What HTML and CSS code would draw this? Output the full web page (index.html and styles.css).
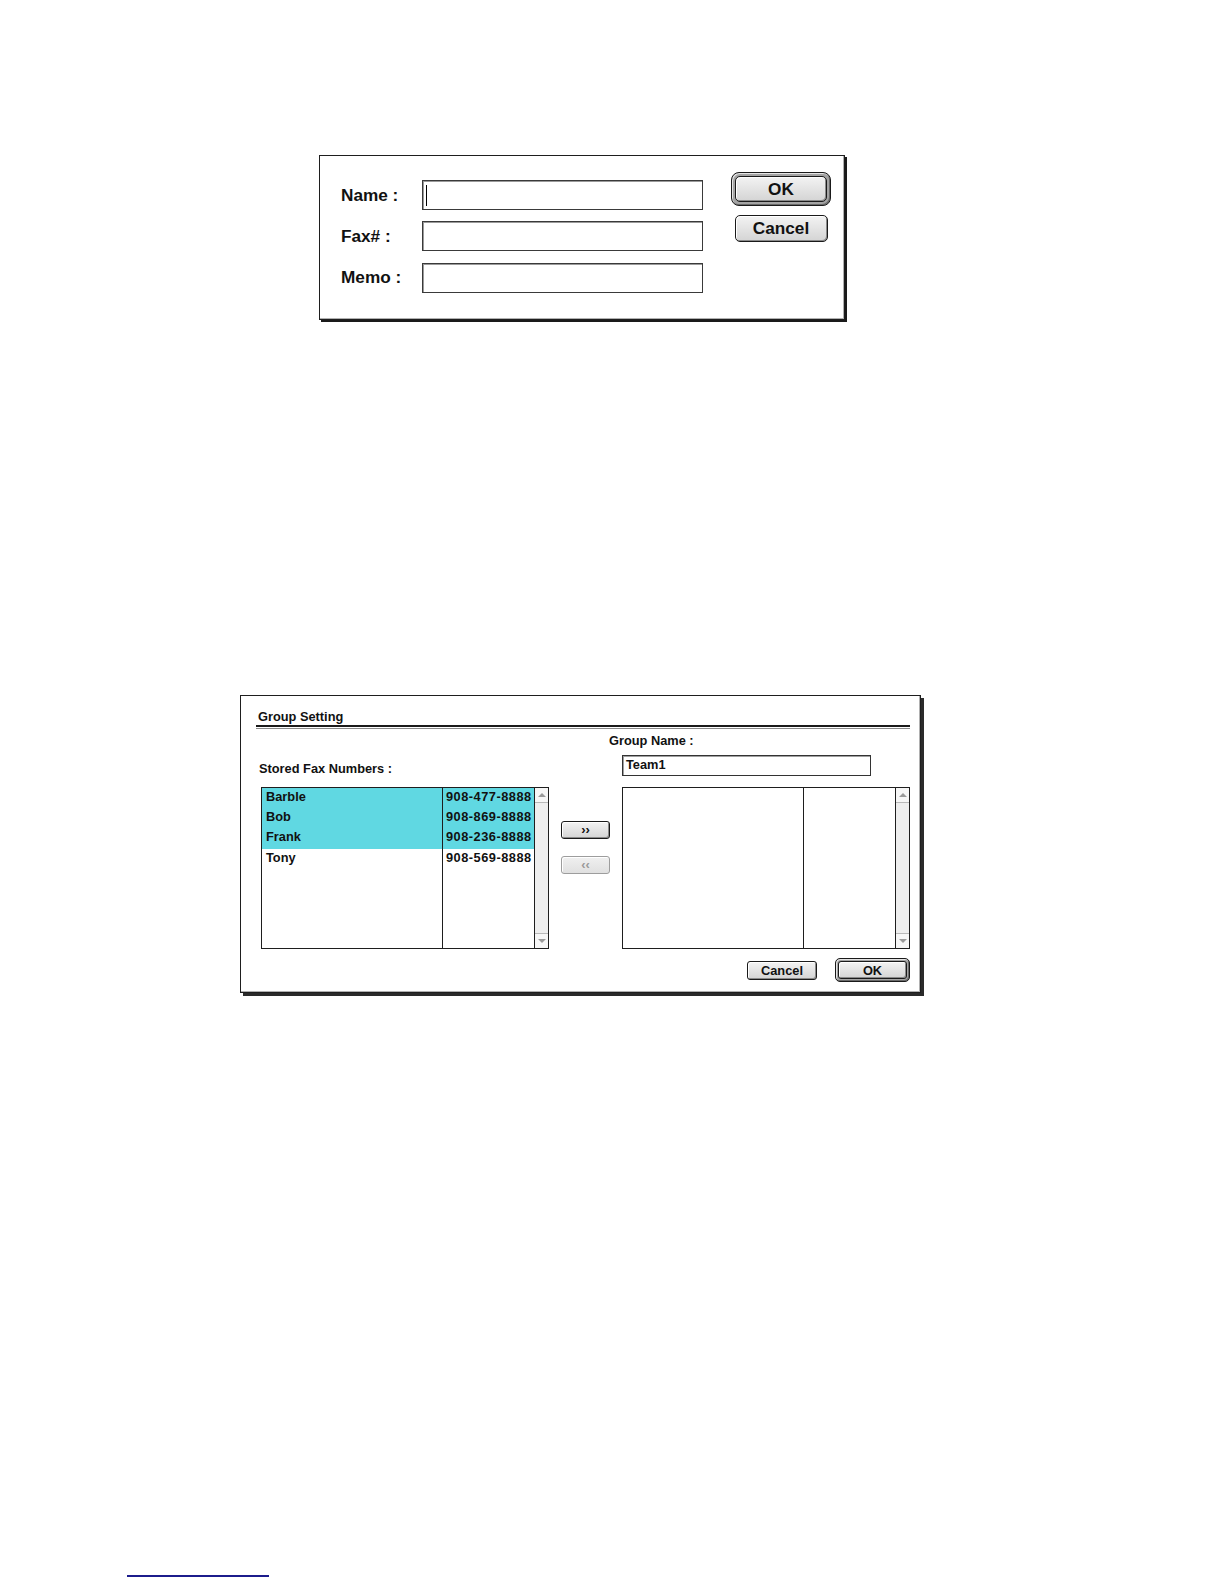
FILE: index.html
```html
<!DOCTYPE html>
<html>
<head>
<meta charset="utf-8">
<link rel="stylesheet" href="styles.css">
</head>
<body>
<div class="dlg1">
  <div class="form1">
    <label class="lbl1">Name :</label>
    <div class="field1"><span class="caret"></span></div>
    <label class="lbl1">Fax# :</label>
    <div class="field1"></div>
    <label class="lbl1">Memo :</label>
    <div class="field1"></div>
  </div>
  <div class="btncol1">
    <div class="ring ring1"><div class="btn btn1-ok">OK</div></div>
    <div class="btn btn1-cancel">Cancel</div>
  </div>
</div>

<div class="dlg2">
  <div class="title2">Group Setting</div>
  <div class="rule2"></div>
  <div class="grid2">
    <div class="lbl-stored">Stored Fax Numbers :</div>
    <div></div>
    <div class="group-block">
      <div class="lbl-group">Group Name :</div>
      <div class="field2">Team1</div>
    </div>

    <div class="list">
      <div class="col-names">
        <div class="row sel">Barble</div>
        <div class="row sel">Bob</div>
        <div class="row sel">Frank</div>
        <div class="row">Tony</div>
      </div>
      <div class="col-nums">
        <div class="row sel">908-477-8888</div>
        <div class="row sel">908-869-8888</div>
        <div class="row sel">908-236-8888</div>
        <div class="row">908-569-8888</div>
      </div>
      <div class="sbar"><div class="arr up"></div><div class="track"></div><div class="arr down"></div></div>
    </div>
    <div class="midbtns">
      <div class="btn btn2-small">&rsaquo;&rsaquo;</div>
      <div class="btn btn2-small disabled">&lsaquo;&lsaquo;</div>
    </div>
    <div class="list">
      <div class="col-names"></div>
      <div class="col-nums"></div>
      <div class="sbar"><div class="arr up"></div><div class="track"></div><div class="arr down"></div></div>
    </div>
  </div>
  <div class="foot2">
    <div class="btn btn2-cancel">Cancel</div>
    <div class="ring ring2"><div class="btn btn2-ok">OK</div></div>
  </div>
</div>

<div class="footer-rule"></div>
</body>
</html>
```

FILE: styles.css
```css
html, body {
  margin: 0;
  padding: 0;
  background: #fff;
}
body {
  width: 1224px;
  min-height: 1584px;
  font-family: "Liberation Sans", Arial, sans-serif;
  color: #111;
  overflow: hidden;
}

/* ---------- shared button ---------- */
.btn {
  box-sizing: border-box;
  display: flex;
  align-items: center;
  justify-content: center;
  font-weight: bold;
  border: 1px solid #1a1a1a;
  background: linear-gradient(#f3f3f3, #d4d4d4);
  box-shadow: inset 1px 1px 0 #fff, inset -1px -1px 0 #8a8a8a;
  color: #111;
}
.ring {
  box-sizing: border-box;
  border: 1px solid #1a1a1a;
  background: #a4a4a4;
  box-shadow: inset 1px 1px 0 #e4e4e4, inset -1px -1px 0 #6a6a6a;
}

/* ---------- dialog 1 ---------- */
.dlg1 {
  box-sizing: border-box;
  margin: 155px 0 0 319px;
  width: 526px;
  height: 165px;
  border: 1px solid #1e1e1e;
  box-shadow: inset -1px -1px 0 #b0b0b0, 2px 2px 0 #1a1a1a;
  display: flex;
  align-items: flex-start;
  padding: 16px 0 0 21px;
  background: #fff;
}
.form1 {
  margin-top: 8px;
  display: grid;
  grid-template-columns: 81px 281px;
  grid-auto-rows: 30px;
  row-gap: 11.4px;
}
.lbl1 {
  font-size: 17.2px;
  font-weight: bold;
  display: flex;
  align-items: center;
  color: #111;
}
.field1 {
  box-sizing: border-box;
  border: 1px solid #3a3a3a;
  box-shadow: inset 1px 1px 0 #9a9a9a;
  display: flex;
  align-items: center;
  background: #fff;
}
.caret {
  display: block;
  margin-left: 3px;
  width: 0;
  height: 21px;
  border-left: 1px solid #000;
}
.btncol1 {
  margin-left: 28px;
  width: 100px;
  display: flex;
  flex-direction: column;
  align-items: center;
}
.ring1 {
  width: 100px;
  height: 34px;
  padding: 3px;
  border-radius: 8px;
}
.btn1-ok {
  width: 100%;
  height: 100%;
  border-radius: 5px;
  font-size: 17.2px;
}
.btn1-cancel {
  margin-top: 9px;
  width: 93px;
  height: 27px;
  border-radius: 5px;
  font-size: 17.2px;
}

/* ---------- dialog 2 ---------- */
.dlg2 {
  box-sizing: border-box;
  margin: 375px 0 0 240px;
  width: 681px;
  height: 298px;
  border: 1px solid #1e1e1e;
  box-shadow: inset -1px -1px 0 #b0b0b0, 3px 3px 0 #2a2a2a;
  padding: 13px 0 0 20px;
  background: #fff;
  font-size: 12.8px;
  font-weight: bold;
}
.title2 {
  margin-left: -3px;
  line-height: 16px;
  height: 16px;
}
.rule2 {
  margin-left: -5px;
  width: 654px;
  height: 1px;
  border-top: 2px solid #1a1a1a;
  border-bottom: 1px solid #8a8a8a;
}
.grid2 {
  display: grid;
  grid-template-columns: 288px 49px 288px;
  column-gap: 12px;
  row-gap: 11px;
}
.lbl-stored {
  align-self: end;
  margin-left: -2px;
  line-height: 16px;
  margin-bottom: -1px;
}
.group-block {
  padding-top: 4px;
}
.lbl-group {
  margin-left: -13px;
  line-height: 16px;
}
.field2 {
  box-sizing: border-box;
  margin-top: 6px;
  width: 249px;
  height: 21px;
  border: 1px solid #333;
  box-shadow: inset 1px 1px 0 #a0a0a0;
  padding-left: 3px;
  line-height: 18px;
}
.list {
  box-sizing: border-box;
  height: 162px;
  border: 1px solid #1e1e1e;
  display: grid;
  grid-template-columns: 181px 91px 14px;
  background: #fff;
}
.col-names {
  border-right: 1px solid #1e1e1e;
}
.col-nums .row {
  padding-left: 3px;
  letter-spacing: 0.5px;
}
.row {
  height: 20.2px;
  line-height: 18px;
  padding-left: 4px;
  white-space: nowrap;
  overflow: hidden;
}
.row.sel {
  background: #60d8e2;
}
.sbar {
  border-left: 1px solid #1e1e1e;
  background: #eeeeee;
  display: flex;
  flex-direction: column;
}
.arr {
  height: 14px;
  background: #f6f6f6;
  position: relative;
}
.arr.up { border-bottom: 1px solid #b8b8b8; }
.arr.down { border-top: 1px solid #b8b8b8; }
.track { flex: 1; }
.arr::after {
  content: "";
  position: absolute;
  left: 3px;
  top: 5px;
  width: 0;
  height: 0;
  border-left: 4px solid transparent;
  border-right: 4px solid transparent;
}
.arr.up::after { border-bottom: 4px solid #9a9a9a; }
.arr.down::after { border-top: 4px solid #9a9a9a; top: 5px; }

.midbtns {
  padding-top: 34px;
  display: flex;
  flex-direction: column;
  gap: 17px;
}
.btn2-small {
  width: 49px;
  height: 18px;
  border-radius: 3px;
  font-size: 13px;
  line-height: 1;
  padding-bottom: 2px;
}
.btn2-small.disabled {
  border-color: #9d9d9d;
  color: #9a9a9a;
  background: linear-gradient(#f0f0f0, #e0e0e0);
  box-shadow: inset 1px 1px 0 #fff;
}
.foot2 {
  margin-top: 9px;
  width: 649px;
  display: flex;
  justify-content: flex-end;
  align-items: center;
  gap: 18px;
}
.btn2-cancel {
  width: 70px;
  height: 19px;
  border-radius: 3px;
  font-size: 12.8px;
}
.ring2 {
  width: 75px;
  height: 24px;
  padding: 2px;
  border-radius: 5px;
}
.btn2-ok {
  width: 100%;
  height: 100%;
  border-radius: 3px;
  font-size: 12.8px;
}

/* ---------- footer link rule ---------- */
.footer-rule {
  margin: 582px 0 0 127px;
  width: 142px;
  height: 2px;
  background: #1c1c8c;
}
```
